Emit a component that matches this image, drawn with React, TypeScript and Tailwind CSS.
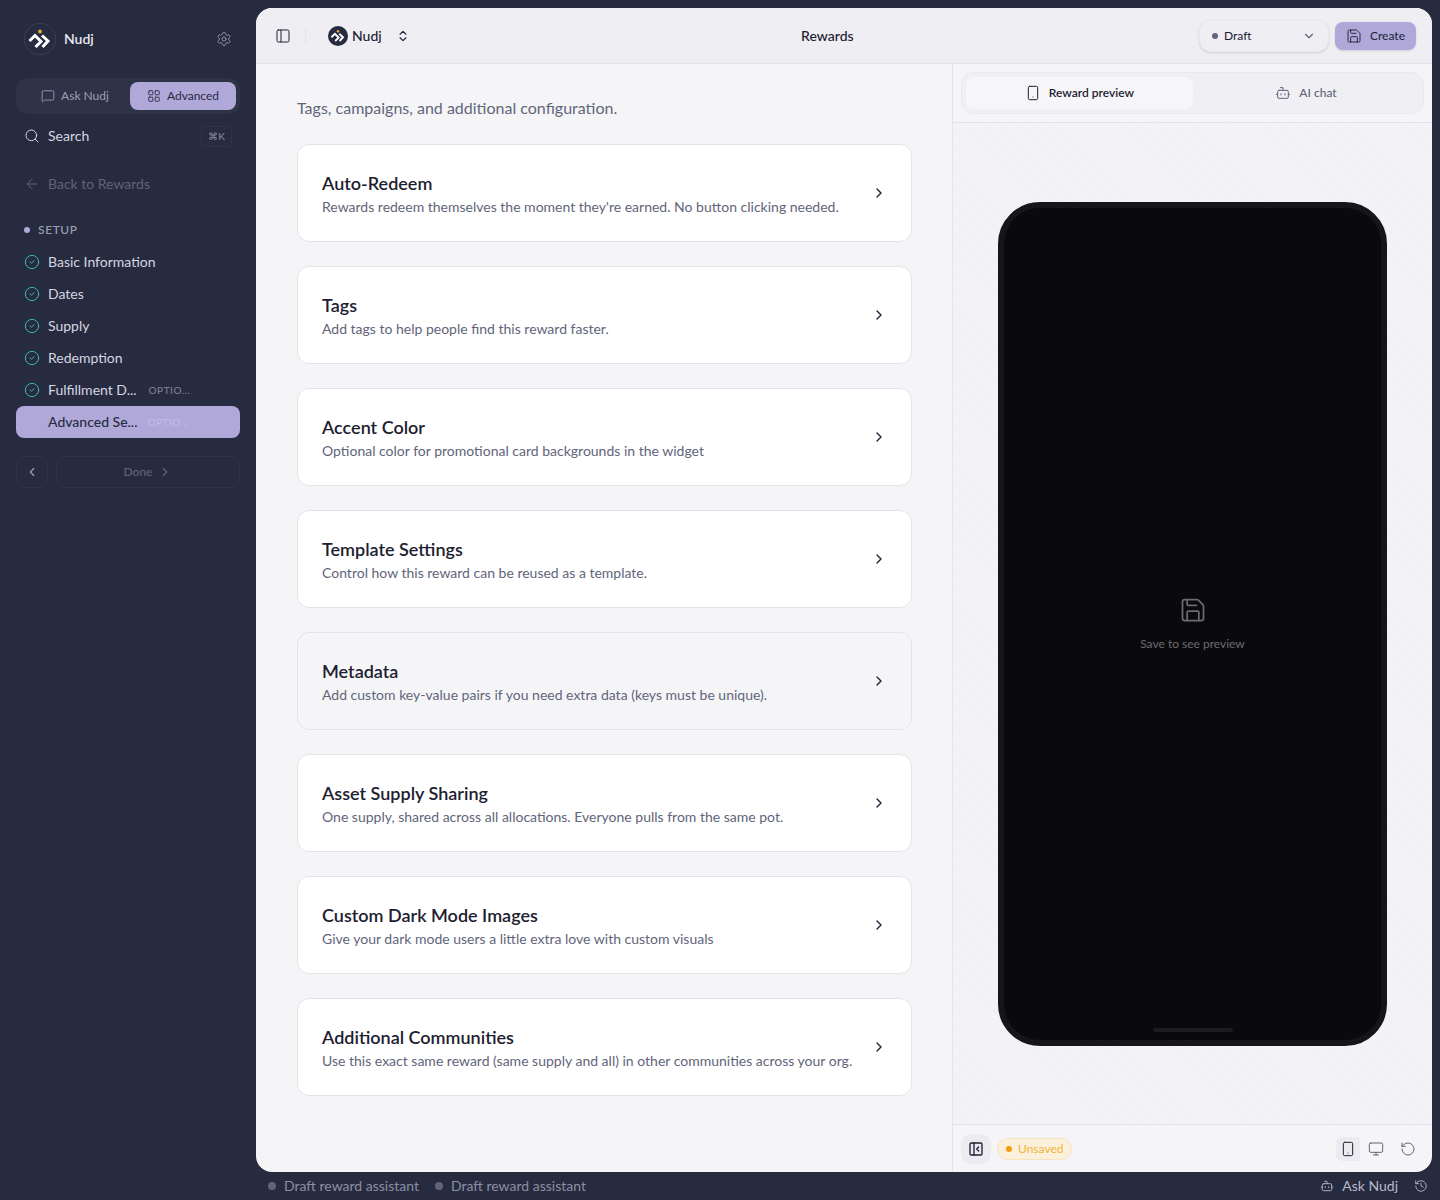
import { ArrowLeft, Bot, ChevronDown, ChevronLeft, ChevronRight, ChevronsUpDown, CircleCheck, History, LayoutGrid, MessageSquare, Monitor, PanelLeft, RotateCcw, Save, Search, Settings, Smartphone } from "lucide-react"

const FONT = "font-['Lato','Noto_Sans',sans-serif]"

const steps = ["Basic Information", "Dates", "Supply", "Redemption"]

const cards = [
  { title: "Auto-Redeem", desc: "Rewards redeem themselves the moment they're earned. No button clicking needed." },
  { title: "Tags", desc: "Add tags to help people find this reward faster." },
  { title: "Accent Color", desc: "Optional color for promotional card backgrounds in the widget" },
  { title: "Template Settings", desc: "Control how this reward can be reused as a template." },
  { title: "Metadata", desc: "Add custom key-value pairs if you need extra data (keys must be unique).", hover: true },
  { title: "Asset Supply Sharing", desc: "One supply, shared across all allocations. Everyone pulls from the same pot." },
  { title: "Custom Dark Mode Images", desc: "Give your dark mode users a little extra love with custom visuals" },
  { title: "Additional Communities", desc: "Use this exact same reward (same supply and all) in other communities across your org." },
]

function Logo({ size, dark }: { size: number; dark?: boolean }) {
  return (
    <svg width={size} height={size} viewBox="0 0 32 32" fill="none">
      {dark ? <circle cx="16" cy="16" r="16" fill="#272b3f" /> : <circle cx="16" cy="16" r="15.6" stroke="#6b6f82" strokeWidth="0.5" strokeDasharray="1.5 1" />}
      <circle cx="16" cy="8.5" r="2" fill="#e0a93b" />
      <path d="M5.5 18 L11 12.5 L17 18.5 L11.5 24" stroke="#fff" strokeWidth="3" />
      <path d="M18 12.5 L24 18 L18.5 24" stroke="#fff" strokeWidth="3" />
    </svg>
  )
}

function Sidebar() {
  return (
    <aside className="w-[256px] shrink-0 flex flex-col px-4">
      <div className="flex items-center h-[78px] pl-2 pr-2 justify-between">
        <div className="flex items-center gap-2">
          <Logo size={32} />
          <span className="text-sm font-semibold text-[#e9e9f0]">Nudj</span>
        </div>
        <Settings size={16} strokeWidth={1.5} className="text-[#8b8fa3]" />
      </div>
      <div className="flex h-[36px] rounded-xl bg-[#2e3348] p-1 mb-[2px]">
        <div className="w-[110px] flex items-center justify-center gap-1.5 text-xs text-[#9da0b3]">
          <MessageSquare size={14} strokeWidth={1.5} />
          Ask Nudj
        </div>
        <div className="flex-1 flex items-center justify-center gap-1.5 text-xs rounded-lg bg-[#b0a8d9] text-[#272b3f]">
          <LayoutGrid size={14} strokeWidth={1.5} />
          Advanced
        </div>
      </div>
      <div className="flex items-center h-[40px] px-2 justify-between">
        <div className="flex items-center gap-2 text-sm text-[#d5d6e0]">
          <Search size={16} strokeWidth={1.5} />
          Search
        </div>
        <span className="rounded border border-[#2e3348] px-1.5 py-0.5 text-[10px] text-[#8b8fa3]">⌘K</span>
      </div>
      <div className="flex items-center gap-2 h-[32px] px-2 mt-[12px] text-sm text-[#5f6479]">
        <ArrowLeft size={16} strokeWidth={1.5} />
        Back to Rewards
      </div>
      <div className="flex items-center gap-2 px-2 mt-[18px] h-[24px] text-xs font-medium tracking-wider text-[#9da0b3]">
        <span className="size-1.5 rounded-full bg-[#b0a8d9]" />
        SETUP
      </div>
      <div className="mt-[4px] flex flex-col">
        {steps.map((s) => (
          <div key={s} className="flex items-center gap-2 h-[32px] px-2 text-sm text-[#d5d6e0]">
            <CircleCheck size={16} strokeWidth={1.5} className="text-[#3fb8b0]" />
            {s}
          </div>
        ))}
        <div className="flex items-center gap-2 h-[32px] px-2 text-sm text-[#d5d6e0]">
          <CircleCheck size={16} strokeWidth={1.5} className="text-[#3fb8b0]" />
          Fulfillment D...
          <span className="ml-1 text-[10px] font-medium tracking-wider text-[#7d8196]">OPTIO...</span>
        </div>
        <div className="flex items-center h-[32px] pl-8 rounded-lg bg-[#b0a8d9] text-sm font-medium text-[#272b3f]">
          Advanced Se...
          <span className="ml-2.5 text-[10px] font-medium tracking-wider text-[#c3bde3]">OPTIO...</span>
        </div>
      </div>
      <div className="flex gap-2 mt-[18px]">
        <div className="size-[32px] flex items-center justify-center rounded-lg border border-[#2e3348] text-[#9da0b3]">
          <ChevronLeft size={14} />
        </div>
        <div className="flex-1 flex items-center justify-center gap-1.5 h-[32px] rounded-lg border border-[#2e3348] text-xs font-medium text-[#5f6479]">
          Done
          <ChevronRight size={14} />
        </div>
      </div>
    </aside>
  )
}

function SettingCard({ title, desc, hover }: { title: string; desc: string; hover?: boolean }) {
  return (
    <div className={`flex items-center justify-between h-[98px] rounded-xl border border-[#e3e3ea] pl-6 pr-6 ${hover ? "bg-[#f5f5f8]" : "bg-white"}`}>
      <div className="flex flex-col">
        <span className="text-lg leading-7 font-semibold text-[#1d2030]">{title}</span>
        <span className="text-sm leading-5 text-[#62657a]">{desc}</span>
      </div>
      <ChevronRight size={16} className="text-[#1d2030]" />
    </div>
  )
}

function Preview() {
  return (
    <div className="flex-1 flex flex-col min-w-0">
      <div className="h-[59px] p-2 border-b border-[#e3e3ea] shrink-0">
        <div className="flex h-[42px] rounded-xl border border-[#e8e8ee] bg-[#f0f0f4] p-1">
          <div className="w-[227px] flex items-center justify-center gap-2 rounded-lg bg-[#f6f6f9] text-xs font-semibold text-[#1d2030]">
            <Smartphone size={16} strokeWidth={1.5} />
            Reward preview
          </div>
          <div className="flex-1 flex items-center justify-center gap-2 text-xs font-medium text-[#62657a]">
            <Bot size={16} strokeWidth={1.5} />
            AI chat
          </div>
        </div>
      </div>
      <div className="flex-1 flex items-center justify-center bg-[#f2f2f4] bg-[repeating-linear-gradient(45deg,#f0f0f2_0px,#f0f0f2_1px,#f4f4f6_1px,#f4f4f6_3px)]">
        <div className="relative w-[389px] h-[844px] rounded-[42px] border-[6px] border-[#16161a] bg-[#0a0a0d] flex flex-col items-center justify-center">
          <Save size={28} strokeWidth={1.5} className="text-[#6b6b70] mb-[12px]" />
          <span className="text-xs text-[#6b6b70]">Save to see preview</span>
          <div className="absolute bottom-[8px] w-[80px] h-[4px] rounded-full bg-[#1c1c20]" />
        </div>
      </div>
      <div className="h-[48px] shrink-0 border-t border-[#e3e3ea] flex items-center justify-between pl-2 pr-4">
        <div className="flex items-center gap-1.5">
          <div className="size-[30px] rounded-[10px] bg-[#ebebf0] flex items-center justify-center text-[#1d2030]">
            <svg width="16" height="16" viewBox="0 0 24 24" fill="none" stroke="currentColor" strokeWidth="2" strokeLinecap="round" strokeLinejoin="round">
              <rect x="3" y="3" width="18" height="18" rx="2" />
              <path d="M9 3v18" />
              <path d="M16 15l-3-3 3-3" />
            </svg>
          </div>
          <div className="flex items-center gap-1.5 h-[22px] px-2 rounded-full border border-[#f7e3bf] bg-[#fbf0dc] text-xs text-[#f3b334]">
            <span className="size-1.5 rounded-full bg-[#f59e0b]" />
            Unsaved
          </div>
        </div>
        <div className="flex items-center gap-2 text-[#62657a]">
          <div className="w-[24px] h-[24px] rounded-l-md bg-[#ebebf0] flex items-center justify-center text-[#1d2030]">
            <Smartphone size={16} strokeWidth={1.5} />
          </div>
          <Monitor size={16} strokeWidth={1.5} />
          <RotateCcw size={16} strokeWidth={1.5} className="ml-2" />
        </div>
      </div>
    </div>
  )
}

export default function App() {
  return (
    <div className={`${FONT} w-[1440px] h-[1200px] bg-[#272b3f] flex overflow-hidden`}>
      <Sidebar />
      <div className="flex-1 flex flex-col min-w-0 pt-2 pr-2">
        <main className="h-[1164px] rounded-2xl bg-[#f5f5f8] flex flex-col overflow-hidden">
          <header className="h-[56px] shrink-0 bg-[#eeeef3] border-b border-[#e3e3ea] flex items-center pl-[19px] pr-4">
            <PanelLeft size={16} strokeWidth={1.5} className="text-[#1d2030]" />
            <div className="w-px h-4 bg-[#e3e3ea] ml-[14px]" />
            <div className="flex items-center gap-1 ml-[22px] text-sm font-medium text-[#1d2030]">
              <Logo size={20} dark />
              Nudj
              <ChevronsUpDown size={14} className="ml-2.5" />
            </div>
            <div className="flex-1 text-center text-sm font-medium text-[#1d2030] pl-[46px]">Rewards</div>
            <div className="flex items-center gap-1.5">
              <div className="w-[130px] h-[32px] flex items-center justify-between px-3 rounded-xl border border-[#e8e8ee] bg-[#eeeef3] shadow-sm text-xs text-[#1d2030]">
                <span className="flex items-center gap-1.5">
                  <span className="size-1.5 rounded-full bg-[#62657a]" />
                  Draft
                </span>
                <ChevronDown size={14} className="text-[#62657a]" />
              </div>
              <div className="w-[81px] h-[28px] flex items-center justify-center gap-2 rounded-lg bg-[#b0a8d9] shadow-sm text-xs font-medium text-[#272b3f]">
                <Save size={16} strokeWidth={1.5} />
                Create
              </div>
            </div>
          </header>
          <div className="flex-1 flex min-h-0">
            <section className="w-[697px] shrink-0 border-r border-[#e3e3ea] pl-[41px] pr-[40px] pt-[32px]">
              <p className="text-base leading-6 text-[#62657a] mb-[24px]">Tags, campaigns, and additional configuration.</p>
              <div className="flex flex-col gap-6">
                {cards.map((c) => (
                  <SettingCard key={c.title} title={c.title} desc={c.desc} hover={c.hover} />
                ))}
              </div>
            </section>
            <Preview />
          </div>
        </main>
        <footer className="flex-1 flex items-center justify-between pl-3 pr-1 text-sm text-[#8b8fa3]">
          <div className="flex items-center gap-4">
            <span className="flex items-center gap-2"><span className="size-2 rounded-full bg-[#62657a]" />Draft reward assistant</span>
            <span className="flex items-center gap-2"><span className="size-2 rounded-full bg-[#62657a]" />Draft reward assistant</span>
          </div>
          <div className="flex items-center gap-4 text-[#b8bacb]">
            <span className="flex items-center gap-2"><Bot size={14} strokeWidth={1.5} />Ask Nudj</span>
            <History size={14} strokeWidth={1.5} />
          </div>
        </footer>
      </div>
    </div>
  )
}
